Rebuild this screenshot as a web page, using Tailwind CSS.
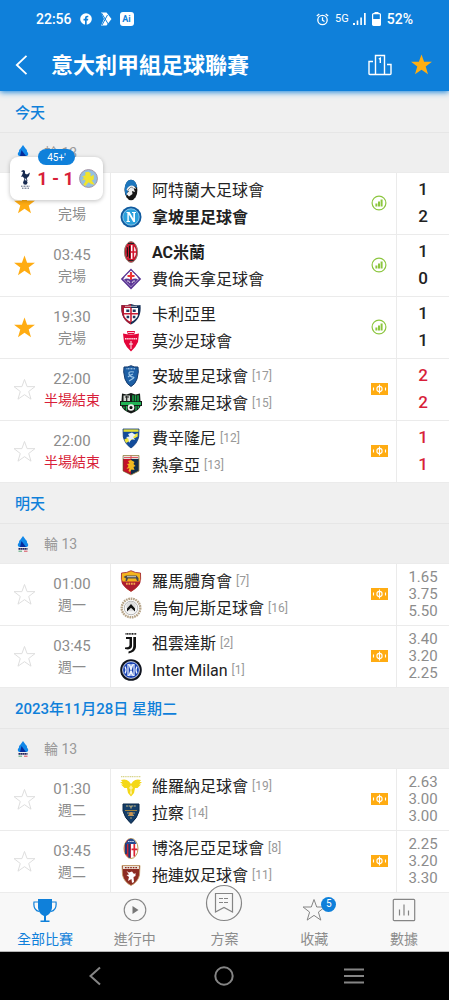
<!DOCTYPE html>
<html lang="zh-Hant">
<head>
  <meta charset="UTF-8" />
  <meta name="viewport" content="width=device-width, initial-scale=1" />
  <title>意大利甲組足球聯賽</title>
  <script src="https://cdn.jsdelivr.net/npm/@tailwindcss/browser@4"></script>
</head>
<body class="bg-[#f0f0f0] font-['Roboto','Noto_Sans_CJK_TC',sans-serif]">

  <!-- Shared icons and club crests -->
  <svg class="hidden" aria-hidden="true">
    <symbol id="star" viewBox="0 0 24 24"><path d="M12 1.5 14.7 9h8.2l-6.5 5.1 2.4 8L12 17.4l-6.8 4.7 2.4-8L1.1 9h8.2Z" /></symbol>
    <symbol id="serie-a" viewBox="0 0 12 16">
      <path d="M6 0 8.500 3.500Q10.500 5 10 6.800 12.500 9 10 11H2Q-.5 9 2 6.800 1.500 5 3.500 3.500Z" fill="#1187e8" />
      <path d="M4.500 5 9 11H3Z" fill="#062c9c" />
      <path d="M1.500 12.800H10.500" stroke="#25265f" stroke-width="1.800" stroke-dasharray="1.800 .3" />
      <path d="M1.500 15.200H5" stroke="#51a878" /><path d="M7 15.200H10.500" stroke="#d74a5b" />
    </symbol>
    <symbol id="stats" viewBox="0 0 16 16">
      <circle cx="8" cy="8" r="6.9" fill="none" stroke="#8cc63f" stroke-width="1.2" />
      <path d="M4.4 8.400h2v3.200h-2zM7 6.600h2v5H7zM9.600 4.600h2v7h-2z" fill="#8cc63f" />
    </symbol>
    <symbol id="pitch" viewBox="0 0 17 12">
      <rect width="17" height="12" fill="#ffac12" />
      <path d="M8.5 1.6v8.8M2.5 4.5v3M14.5 4.5v3" stroke="#fff" stroke-width="1.1" />
      <circle cx="8.5" cy="6" r="2.6" fill="none" stroke="#fff" stroke-width="1.1" />
    </symbol>

    <symbol id="atalanta" viewBox="0 0 22 22">
      <ellipse cx="11" cy="11" rx="6.4" ry="10.3" fill="#161616" />
      <path d="M11 .7C7 .7 4.6 5.5 4.6 11Q5 15 6.500 17L9 9Q13 5 17.3 9C16.8 4 14.400 .7 11 .7Z" fill="#1d76bd" />
      <path d="M6.500 11Q8 6.500 12 6.500 15.500 7 16 10L13.500 9 15 13 12 12 12.500 15 9 17.500 6.500 15 9 12Z" fill="#eee" />
      <path d="M8 11 11 8 13 9" stroke="#777" stroke-width=".8" fill="none" />
    </symbol>
    <symbol id="napoli" viewBox="0 0 22 22">
      <circle cx="11" cy="11" r="10.5" fill="#0f5a9f" /><circle cx="11" cy="11" r="8.200" fill="#2ba0dc" stroke="#9fd6f2" stroke-width=".8" />
      <path d="M6.500 6H9.600L13.300 12.500V7H12V6H16V7H15V16H13.300L8.800 8.500V15H10V16H6.500V15H7.400V7H6.500Z" fill="#fff" />
    </symbol>
    <symbol id="milan" viewBox="0 0 22 22">
      <ellipse cx="11" cy="11" rx="6.600" ry="10.400" fill="#c7142b" stroke="#8f8376" />
      <ellipse cx="11" cy="11" rx="5" ry="7" fill="#fff" />
      <path d="M11 4C8 4 6 7.200 6 11s2 7 5 7Z" fill="#d3152d" /><path d="M7.300 6.300v9.500M9.600 4.600v13" stroke="#111" stroke-width="1.200" />
      <path d="M13.300 4.600v12.800M11 11h5" stroke="#d3152d" stroke-width="1.700" />
      <path d="M8 2.500h6M8.500 19.500h5" stroke="#222" stroke-width="1.100" />
    </symbol>
    <symbol id="fiorentina" viewBox="0 0 22 22">
      <path d="M11 1.800 20 11 11 20.200 2 11Z" fill="#fff" stroke="#583292" stroke-width="1.700" />
      <path d="M4 9.500 11 2.500 18 9.500 15 10H7Z" fill="#fff" />
      <path d="M11 4v8M7.500 8h7" stroke="#ee3436" stroke-width="2.200" />
      <path d="M4 11.500Q7 9.500 11 12 15 9.500 18 11.500L11 18.500Z" fill="#5c3695" />
      <path d="M7 13Q9 12 10 15M15 13Q13 12 12 15" fill="none" stroke="#fff" stroke-width=".8" />
    </symbol>
    <symbol id="cagliari" viewBox="0 0 22 22">
      <path d="M1.500 2Q6 3 11 1 16 3 20.500 2 22 16 11 21.500 0 16 1.500 2Z" fill="#152f55" />
      <path d="M1.500 2Q6 3 11 1V21.500Q0 16 1.500 2Z" fill="#ab1832" />
      <path d="M4 5H18V12Q17 16 11 19 5 16 4 12Z" fill="#fff" />
      <path d="M11 5v14M4 10.800h14" stroke="#c91f37" stroke-width="1.600" />
      <path d="M6.300 6.500h3v2.500h-3zM12.700 6.500h3v2.500h-3zM6.600 12.800h2.600v2.400H6.600zM12.800 12.800h2.600v2.400h-2.600z" fill="#203a61" />
      <path d="M5 3.300h12" stroke="#e3dbe0" stroke-width=".8" />
    </symbol>
    <symbol id="monza" viewBox="0 0 22 22">
      <path d="M7 1h8l-.8 3.500H7.800Z" fill="#e4063a" /><path d="M8 2.500h6" stroke="#fff" stroke-width=".8" />
      <path d="M3 3.500 11 5 19 3.500 18 12Q16 17 11 21.500 6 17 4 12Z" fill="#e4063a" />
      <path d="M5 8.700h12" stroke="#fbd3dc" stroke-width="1.600" stroke-dasharray="1.600 .5" /><path d="M11 11v8M9 14h4" stroke="#fff" stroke-width=".9" />
    </symbol>
    <symbol id="empoli" viewBox="0 0 22 22">
      <path d="M4 2Q8 2.500 11 .7 14 2.500 18 2L18.300 7 17 14Q15 19.500 11 21.500 7 19.500 5 14L3.700 7Z" fill="#1d5fa5" stroke="#163b6d" />
      <path d="M6.500 3.800h9" stroke="#c9def2" stroke-width="1" stroke-dasharray="1 .5" />
      <path d="M14 7Q8 6 9 9T13 12 9 16M8 12Q10 10 13 9" fill="none" stroke="#9ac5e7" stroke-width="1.200" />
    </symbol>
    <symbol id="sassuolo" viewBox="0 0 22 22">
      <path d="M2 1.500 6.500 2.500 11 1 15.500 2.500 20 1.500 20.500 9H22V14H20.500Q19 19 11 21.500 3 19 1.500 14H0V9H1.500Z" fill="#141a16" />
      <path d="M3.500 3.500H10V9H3.500Z" fill="#d5dad4" /><path d="M5 5h4M6.700 4v5" stroke="#222" stroke-width="1.200" />
      <path d="M13 3.300v6M15.500 3.300v6M18 3.300v6" stroke="#16a64a" stroke-width="1.500" />
      <path d="M1 10h20v3H1z" fill="#20b455" /><path d="M4 14.500v2M6.500 14v4.500M16 14v4.500M18.300 14v2.500" stroke="#20b455" stroke-width="1.300" />
      <circle cx="11" cy="15.500" r="3.300" fill="#f3f3f3" /><path d="m11 13.800 1.700 1.300-.6 2H9.900l-.6-2Z" fill="#111" />
    </symbol>
    <symbol id="frosinone" viewBox="0 0 22 22">
      <path d="M3 2H19L18.700 10Q17 17 11 21 5 17 3.300 10Z" fill="#124b9b" stroke="#0f397a" stroke-width=".8" />
      <path d="M3.500 2.400h15v2.400h-15z" fill="#e3dc35" /><path d="M4.300 12.500 17.700 6V9.500L6 16Z" fill="#f0e53b" />
      <path d="M8 7 12 5.500 15.500 8 13 10 15 13 11.500 12 9 16 8.500 12 6 10 9.500 9.500Z" fill="#e8f0f8" />
    </symbol>
    <symbol id="genoa" viewBox="0 0 22 22">
      <path d="M3 1.500H19V17Q15 19 11 21 7 19 3 17Z" fill="#102b49" stroke="#a58b45" stroke-width=".8" />
      <path d="M3.400 5H11V20.500L3.400 17Z" fill="#c41127" /><path d="M3.400 1.900h15.200v3H3.400z" fill="#f8f3ed" />
      <path d="M11 1.500V5M4 3.400H18" stroke="#d94750" stroke-width="1" />
      <path d="M8 7 11 6 14.500 8 13.500 10 15.500 12 13.500 13 14.500 16 11.500 15.500 10 18 8.500 17 9.500 14 6.500 15 8.500 12 7 10 9.500 9.500Z" fill="#f1b91f" />
    </symbol>
    <symbol id="roma" viewBox="0 0 22 22">
      <path d="M1.500 3Q7 3 11 .7 15 3 20.500 3 21.500 10 19 14 16.500 18.500 11 21.500 5.500 18.500 3 14 .5 10 1.500 3Z" fill="#f5b51d" stroke="#9c1b2c" stroke-width=".8" />
      <path d="M1.300 11.500H20.700Q20 16 11 21.300 2 16 1.300 11.500Z" fill="#ad1d2e" />
      <path d="M3.500 7 6 5.500H16.500L18.500 8V11H17L16 8.500H8L7 11H5.500L6 8.500Z" fill="#4c4c4c" /><path d="M7 6.700H16" stroke="#ddd" stroke-width=".9" />
      <path d="M6 13.700h10" stroke="#f0a84f" stroke-width="2" stroke-dasharray="1.700 .8" />
    </symbol>
    <symbol id="udinese" viewBox="0 0 22 22">
      <circle cx="11" cy="11" r="9.300" fill="none" stroke="#b6a489" stroke-width="2.400" stroke-dasharray="1.700 .7" />
      <circle cx="11" cy="11" r="6.800" fill="#f5f5f5" stroke="#999" stroke-width=".7" />
      <circle cx="11" cy="9.500" r="4.800" fill="#ddd" />
      <path d="M11 7 15 11.500V14.500L11 10.700 7 14.500V11.500Z" fill="#111" />
    </symbol>
    <symbol id="juventus" viewBox="0 0 22 22">
      <path d="M5.500 1.800h11" stroke="#222" stroke-width="1.800" stroke-dasharray="1.100 .5" />
      <path d="M6 5H12V14Q12 16.500 8 17.500L5 17V15.500Q9.500 15.500 9.500 13V7H6Z" fill="#111" />
      <path d="M13.300 5H16V15Q15.500 20 8.500 21.500V19.500Q13.300 18.500 13.300 14Z" fill="#111" />
    </symbol>
    <symbol id="inter" viewBox="0 0 22 22">
      <circle cx="11" cy="11" r="10.800" fill="#10141f" /><circle cx="11" cy="11" r="8.400" fill="#1741b3" stroke="#f1f5ff" stroke-width=".8" />
      <path d="M8 5V17M14 5V17M9 5 13 17M13 5 9 17M11 5V17M5 7.500Q7 11 5 14.500M17 7.500Q15 11 17 14.500" fill="none" stroke="#eef4ff" stroke-width="1.200" />
    </symbol>
    <symbol id="verona" viewBox="0 0 22 22">
      <path d="M1 1.600H21" stroke="#d7d48c" stroke-width="1.100" stroke-dasharray="1.200 .6" />
      <path d="M1 5Q6 3.500 9 6.500L11 9 13 6.500Q16 3.500 21 5L19.500 7H22L19 9.500H21L17.500 13H15L14 18 11 21.500 8 18 7 13H4.500L1 9.500H3L0 7H2.500Z" fill="#f4d817" />
      <path d="M11 10 13 13 11.500 14.500 12 18 11 20 10 18 10.500 14.500 9 13Z" fill="#fff09b" />
    </symbol>
    <symbol id="lecce" viewBox="0 0 22 22">
      <path d="M3 2H19V9Q17.500 16 11 21.500 4.500 16 3 9Z" fill="#153e69" stroke="#0d2948" />
      <path d="M6 4h10M11 4v3" stroke="#c8b780" stroke-width="1.200" stroke-dasharray="2 .6" />
      <path d="M5 8.500h12" stroke="#b48d3a" stroke-width=".9" /><path d="M7 11h8M8 13.300h6M10 16h2" stroke="#a99b72" stroke-width="1.200" />
      <circle cx="11" cy="12" r="2" fill="#d0944e" />
    </symbol>
    <symbol id="bologna" viewBox="0 0 22 22">
      <ellipse cx="11" cy="11.500" rx="7" ry="10" fill="#fff" stroke="#bc9e57" />
      <path d="M11 1.800C7 1.800 4.500 6 4.500 11.500S7 21 11 21Z" fill="#ce2637" /><path d="M6 6v11M9.300 3v17.700" stroke="#173b79" stroke-width="1.800" />
      <path d="M14.300 7v12.500M11.500 12.300h6" stroke="#dc2534" stroke-width="1.700" />
      <path d="M5.500 7Q7.500 1.700 11 1.700T16.500 7Z" fill="#264b92" /><path d="M8 4.500h6" stroke="#d1d7e8" stroke-width="1.100" stroke-dasharray="1.600 .5" />
    </symbol>
    <symbol id="torino" viewBox="0 0 22 22">
      <path d="M2 1.500H20L19.500 11Q18 18 11 21.500 4 18 2.500 11Z" fill="#8d2c22" stroke="#c29b65" stroke-width=".8" />
      <path d="M3 2H19V5H3Z" fill="#eadfd4" /><path d="M5 3.600h12" stroke="#8d2c22" stroke-width="1.300" stroke-dasharray="1.600 1" />
      <path d="M6.500 7 9 8.500 12 7.500 14 10 15.500 9V12L13.500 13 14 18 12 19 11.500 15 8 17 9 13 6.500 11 9 10.500Z" fill="#fff" />
    </symbol>
    <symbol id="tottenham" viewBox="0 0 14 20">
      <path d="M4 1.500 6 1 7 2.200V4.500L9 5.500 12 3.500 11 7 8.500 9.500H6.500L4.500 7.500 3 8 4.500 5 5 3 3 2.500Z" fill="#172a50" />
      <path d="M7 9 6.300 12M8.300 9 9 12" stroke="#172a50" stroke-width=".9" /><circle cx="7.300" cy="13.500" r="2.200" fill="#172a50" />
      <path d="M3 17.200h9M4 19.200h7" stroke="#56617b" stroke-width="1" stroke-dasharray="1 .5" />
    </symbol>
    <symbol id="villa" viewBox="0 0 18 18">
      <circle cx="9" cy="9" r="8.500" fill="#95bfe0" stroke="#a0899a" stroke-width=".8" />
      <path d="M6 3 9 2.500 11 4V7L14 5.500V10L12 11 15 15 12 14.500 9 12.500 6 16 4 15 6 12V10L2.500 11 5 8.500 3 7 6 6Z" fill="#f1e32d" />
    </symbol>
  </svg>

  <div class="relative flex h-screen flex-col overflow-hidden">

    <header class="relative z-10 bg-[#0f80da] text-white shadow-[0_1px_6px_#0f80da]">
      <!-- Status bar -->
      <div class="flex h-[38px] items-center justify-between pl-9 pr-9 text-sm font-medium">
        <div class="flex items-center gap-2">
          <span>22:56</span>
          <svg class="size-3" viewBox="0 0 12 12"><circle cx="6" cy="6" r="5.800" fill="#fff" /><path d="M5 12V7.500H3.500V5.800H5V4.700Q5 2.700 7 2.700H8.300V4.200H7.500Q6.700 4.200 6.700 5V5.800H8.300L8 7.500H6.700V12Z" fill="#0f80da" /></svg>
          <svg class="h-[14px] w-3" viewBox="0 0 12 14"><path d="M1 .5H6.500L11.500 7 6.500 13.500H1L4 7Z" fill="#fff" /><path d="M1.500 1 8.500 12.500M7.500 3 2 13" stroke="#0f80da" stroke-width="1" /></svg>
          <span class="flex size-[14px] items-center justify-center rounded-[3px] bg-white text-[9px] font-bold text-[#0f80da]">Ai</span>
        </div>
        <div class="flex items-center gap-[6px]">
          <svg class="size-[13px]" viewBox="0 0 13 13" fill="none" stroke="#fff" stroke-width="1.300"><circle cx="6.500" cy="7" r="4.700" /><path d="M6.500 4.200V7.200L8.500 8.500M.8 3 3.300 1M12.200 3 9.700 1" /></svg>
          <div class="flex items-center gap-1">
            <span class="text-[11px] font-normal">5G</span>
            <svg class="h-3 w-[13px]" viewBox="0 0 13 12"><path d="M0 10h2v2H0zM3.700 7.500h1.600V12H3.700zM7.300 4.500h1.600V12H7.300zM11 0h1.700v12H11z" fill="#fff" /></svg>
          </div>
          <svg class="h-[14px] w-[9px]" viewBox="0 0 9 14"><path d="M2.500 0h4v1.500h-4z" fill="#fff" /><rect x=".6" y="1.600" width="7.800" height="11.800" rx="1" fill="none" stroke="#fff" stroke-width="1.200" /><path d="M1 7h7v6H1z" fill="#fff" /></svg>
          <span>52%</span>
        </div>
      </div>
      <!-- Title bar -->
      <div class="flex h-[53px] items-center pl-[14px] pr-4">
        <button type="button" aria-label="返回" class="w-[37px]">
          <svg class="h-5 w-[14px]" viewBox="0 0 14 20" fill="none" stroke="#fff" stroke-width="1.800"><path d="M12.500 .8 2.800 10 12.500 19.200" /></svg>
        </button>
        <h1 class="flex-1 pt-[3px] text-[22px] leading-8 font-bold">意大利甲組足球聯賽</h1>
        <button type="button" aria-label="排名" class="mr-[18px]">
          <svg class="h-[22px] w-6" viewBox="0 0 24 22" fill="none" stroke="#fff" stroke-width="1.400"><path d="M7.500 20.500H2Q1 20.500 1 19.500V7.500H5M7.500 20.500V1.500H16.500V20.500ZM16.500 20.500H22Q23 20.500 23 19.500V10.500H19" /><path d="M10.800 5 12.300 4.200V9" /></svg>
        </button>
        <button type="button" aria-label="收藏聯賽"><svg class="size-[23px] fill-[#ffae12]"><use href="#star" /></svg></button>
      </div>
    </header>

    <main id="matches" class="min-h-0 flex-1 overflow-hidden pt-px"></main>

    <!-- Floating live score -->
    <a href="#" class="absolute top-[157px] left-[10px] z-10 flex h-[43px] w-[93px] items-center justify-between rounded-lg bg-white pr-[5px] pl-2 shadow-[0_1px_4px_rgba(0,0,0,0.25)]">
      <span class="absolute -top-2 left-7 flex h-4 w-[37px] items-center justify-center rounded-full bg-[#0f80da] text-[10px] text-white">45+'</span>
      <svg class="h-5 w-[14px]"><use href="#tottenham" /></svg>
      <b class="text-lg font-bold whitespace-pre text-[#d81f3a]">1 - 1</b>
      <svg class="size-[19px]"><use href="#villa" /></svg>
    </a>

    <!-- Tab bar -->
    <nav class="relative grid h-[60px] grid-cols-5 border-y border-t-[#ececec] border-b-[#b5b5b5] bg-[#f8f8f8] text-sm text-[#8c8c8c]">
      <a href="#" class="flex flex-col items-center gap-[7px] pt-[5px] text-[#0f80da]">
        <svg class="size-6" viewBox="0 0 24 24"><path d="M5 1H19V10Q18 16 13 18V22.500H16.500V24H7.500V22.500H11V18Q6 16 5 10Z" fill="#0f80da" /><path d="M5 4H1Q0 12 6 13.500M19 4H23Q24 12 18 13.500" fill="none" stroke="#0f80da" stroke-width="1.200" /></svg>
        <span>全部比賽</span>
      </a>
      <a href="#" class="flex flex-col items-center gap-[7px] pt-[5px]">
        <svg class="size-6" viewBox="0 0 24 24"><circle cx="12" cy="12" r="10.800" fill="none" stroke="#858585" stroke-width="1.100" /><path d="M9.500 8 15.500 12 9.500 16Z" fill="#777" /></svg>
        <span>進行中</span>
      </a>
      <a href="#" class="flex flex-col items-center gap-[7px] pt-[5px]">
        <span class="h-6"><svg class="relative -top-[14px] size-[38px]" viewBox="0 0 38 38" fill="none" stroke="#858585" stroke-width="1.200"><circle cx="19" cy="19" r="17.500" fill="#f8f8f8" /><path d="M10.500 9.500H27.500V28L19 23.500 10.500 28Z" /><path d="M14 14.500H24M14 18.500H24" stroke-dasharray="4 1" /></svg></span>
        <span>方案</span>
      </a>
      <a href="#" class="relative flex flex-col items-center gap-[7px] pt-[5px]">
        <svg class="size-6 fill-none stroke-[#858585]"><use href="#star" /></svg>
        <span>收藏</span>
        <span class="absolute top-1 left-1/2 ml-[7px] flex size-[15px] items-center justify-center rounded-full bg-[#0f80da] text-[10px] text-white">5</span>
      </a>
      <a href="#" class="flex flex-col items-center gap-[7px] pt-[5px]">
        <svg class="size-6" viewBox="0 0 24 24" fill="none" stroke="#858585" stroke-width="1.200"><rect x="1.300" y="1.300" width="21.400" height="21.400" rx="1" /><path d="M7.500 11.500V17.500M12 6.500V17.500M16.500 12.500V17.500" /></svg>
        <span>數據</span>
      </a>
    </nav>

    <!-- System navigation -->
    <div class="grid h-12 grid-cols-3 items-center justify-items-center bg-black px-[30px]">
      <button type="button" aria-label="Back"><svg class="h-5 w-3" viewBox="0 0 12 20" fill="none" stroke="#858585" stroke-width="2"><path d="M11 1.500 1.500 10 11 18.500" /></svg></button>
      <button type="button" aria-label="Home"><svg class="size-5" viewBox="0 0 20 20"><circle cx="10" cy="10" r="8.700" fill="none" stroke="#858585" stroke-width="2" /></svg></button>
      <button type="button" aria-label="Menu"><svg class="h-4 w-5" viewBox="0 0 20 16"><path d="M0 1.500H20M0 8H20M0 14.500H20" stroke="#858585" stroke-width="2" /></svg></button>
    </div>
  </div>

  <script>
    // team: [crest, name, rank, winner]
    const days = [
      { title: '今天', matches: [
        { fav: true, time: '&nbsp;', status: '完場', home: ['atalanta', '阿特蘭大足球會'], away: ['napoli', '拿坡里足球會', '', true], score: ['1', '2'] },
        { fav: true, time: '03:45', status: '完場', home: ['milan', 'AC米蘭', '', true], away: ['fiorentina', '費倫天拿足球會'], score: ['1', '0'] },
        { fav: true, time: '19:30', status: '完場', home: ['cagliari', '卡利亞里'], away: ['monza', '莫沙足球會'], score: ['1', '1'] },
        { live: true, time: '22:00', status: '半場結束', home: ['empoli', '安玻里足球會', 17], away: ['sassuolo', '莎索羅足球會', 15], score: ['2', '2'] },
        { live: true, time: '22:00', status: '半場結束', home: ['frosinone', '費辛隆尼', 12], away: ['genoa', '熱拿亞', 13], score: ['1', '1'] }
      ] },
      { title: '明天', matches: [
        { time: '01:00', status: '週一', home: ['roma', '羅馬體育會', 7], away: ['udinese', '烏甸尼斯足球會', 16], odds: ['1.65', '3.75', '5.50'] },
        { time: '03:45', status: '週一', home: ['juventus', '祖雲達斯', 2], away: ['inter', 'Inter Milan', 1], odds: ['3.40', '3.20', '2.25'] }
      ] },
      { title: '2023年11月28日 星期二', matches: [
        { time: '01:30', status: '週二', home: ['verona', '維羅納足球會', 19], away: ['lecce', '拉察', 14], odds: ['2.63', '3.00', '3.00'] },
        { time: '03:45', status: '週二', home: ['bologna', '博洛尼亞足球會', 8], away: ['torino', '拖連奴足球會', 11], odds: ['2.25', '3.20', '3.30'] }
      ] }
    ];

    const team = ([crest, name, rank, winner]) => `
      <div class="flex h-[27px] items-center">
        <svg class="mr-[10px] size-[22px] shrink-0"><use href="#${crest}" /></svg>
        <span class="pt-[2px] ${winner ? 'font-bold' : ''}">${name}</span>
        ${rank ? `<span class="ml-1 text-xs text-[#999]">[${rank}]</span>` : ''}
      </div>`;

    const result = m => m.odds
      ? `<div class="text-[15px] leading-[17px] text-[#8c8c8c]">${m.odds.map(o => `<div>${o}</div>`).join('')}</div>`
      : `<div class="pb-[2px] text-[17px] leading-[27px] font-medium ${m.live ? 'text-[#d81f3a]' : ''}">${m.score.map(s => `<div>${s}</div>`).join('')}</div>`;

    const match = m => `
      <li class="flex h-[62px] border-t border-[#ebebeb] bg-white">
        <div class="grid w-[111px] grid-cols-[43px_58px] items-center border-r border-[#ebebeb]">
          <button type="button" aria-label="收藏" class="pl-[13px]"><svg class="size-[23px] ${m.fav ? 'fill-[#ffac12]' : 'fill-none stroke-[#dcdcdc]'}"><use href="#star" /></svg></button>
          <div class="text-center leading-[21px] text-[#8c8c8c]">
            <div class="text-[15px]">${m.time}</div>
            <div class="text-sm leading-[21px] whitespace-nowrap ${m.live ? 'text-[#d81f3a]' : ''}">${m.status}</div>
          </div>
        </div>
        <div class="flex flex-1 flex-col justify-center pl-[9px] text-base text-[#222]">${team(m.home)}${team(m.away)}</div>
        <div class="flex w-[34px] items-center justify-center pb-[2px]">
          ${m.score && !m.live ? '<svg class="size-4"><use href="#stats" /></svg>' : '<svg class="h-3 w-[17px]"><use href="#pitch" /></svg>'}
        </div>
        <div class="flex w-[53px] items-center justify-center border-l border-[#ebebeb] text-[#222]">${result(m)}</div>
      </li>`;

    document.getElementById('matches').innerHTML = days.map(d => `
      <section>
        <h2 class="flex h-[41px] items-center border-b border-[#e6e6e6] pt-[2px] pl-[15px] text-[15px] font-medium text-[#0f80da]">${d.title}</h2>
        <h3 class="flex h-[39px] items-center bg-[#efefef] pl-[17px] text-sm text-[#999]">
          <svg class="mr-[15px] h-4 w-3"><use href="#serie-a" /></svg>輪 13
        </h3>
        <ul class="border-b border-[#ebebeb]">${d.matches.map(match).join('')}</ul>
      </section>`).join('');
  </script>
</body>
</html>
